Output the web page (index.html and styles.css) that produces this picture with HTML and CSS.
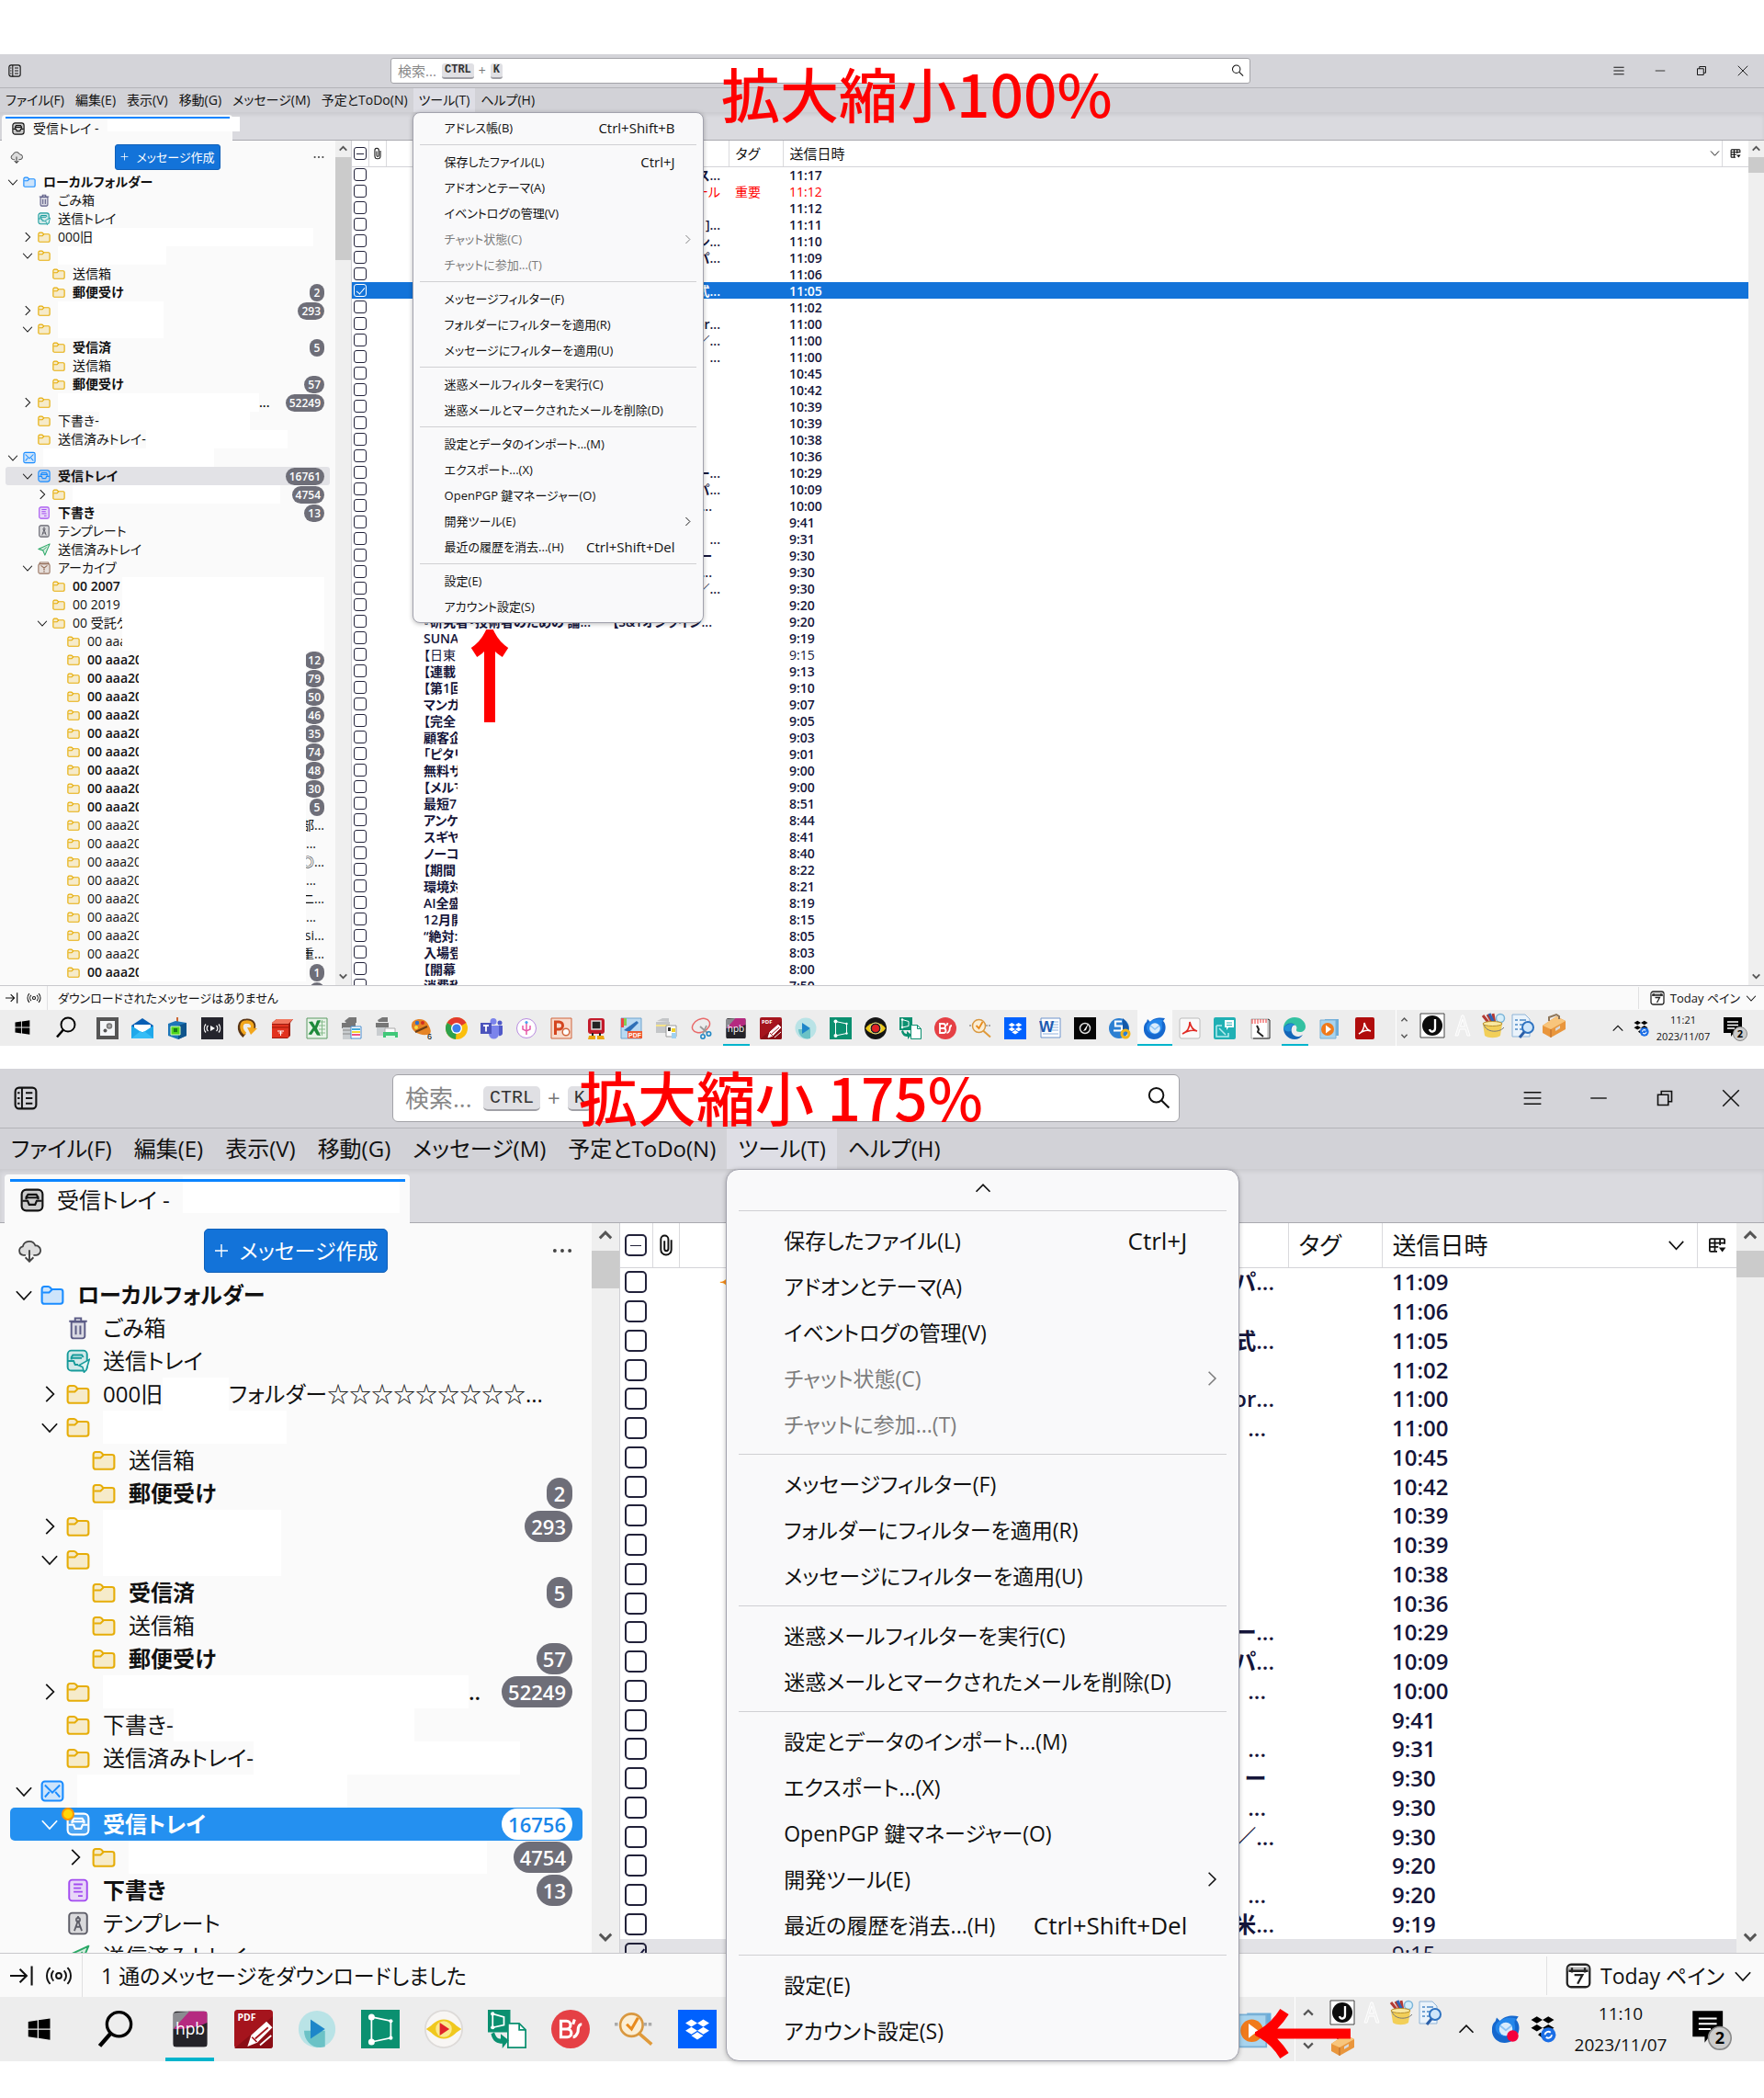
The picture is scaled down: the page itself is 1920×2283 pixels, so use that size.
FILE: index.html
```html
<!DOCTYPE html>
<html lang="ja">
<head>
<meta charset="utf-8">
<title>拡大縮小 100% / 175%</title>
<link rel="stylesheet" href="styles.css">
</head>
<body>
<svg class="defs" aria-hidden="true">
<symbol id="folder" viewBox="0 0 16 16"><path d="M1 4.2C1 3 1.6 2.5 2.6 2.5h2.6c.7 0 1 .2 1.4.7l.9 1.1h5.9c1 0 1.600.5 1.600 1.500v6.700c0 1-.6 1.500-1.600 1.500H2.600c-1 0-1.600-.5-1.600-1.500z" fill="currentColor" fill-opacity=".2" stroke="currentColor" stroke-width="1.300"/><path d="M1.500 6.500h4.300l2-2" fill="none" stroke="currentColor" stroke-width="1.200"/></symbol>
<symbol id="trash" viewBox="0 0 16 16"><path d="M3.500 4v9.500a1.500 1.500 0 0 0 1.500 1.500h6a1.500 1.500 0 0 0 1.500-1.500V4z" fill="currentColor" fill-opacity=".2" stroke="currentColor" stroke-width="1.200"/><path d="M2 3.500h12M6 3V1.500h4V3M6.500 6.500v6M9.500 6.500v6" fill="none" stroke="currentColor" stroke-width="1.200"/></symbol>
<symbol id="outbox" viewBox="0 0 16 16"><rect x="1" y="1" width="13" height="13.500" rx="2.500" fill="currentColor" fill-opacity=".18" stroke="currentColor" stroke-width="1.200"/><path d="M3.500 7V5.500l1-1.500h6l1 1.500M3.500 6h7M1 8h4l1 2.500h2" fill="none" stroke="currentColor" stroke-width="1.200"/><path d="M15.500 7l-7 4 2.500 1 1 3.500 1.500-1.500z" fill="#e3f5f5" stroke="currentColor"/></symbol>
<symbol id="inbox" viewBox="0 0 16 16"><rect x="1" y="1" width="14" height="14" rx="3" fill="currentColor" fill-opacity=".2" stroke="currentColor" stroke-width="1.300"/><path d="M4 7.500V6l1.200-1.800h5.600L12 6v1.500M4 6.300h8M1.500 8.500H5l1 2.500h4l1-2.500h3.500" fill="none" stroke="currentColor" stroke-width="1.300"/></symbol>
<symbol id="mail" viewBox="0 0 16 16"><rect x="1" y="1.500" width="14" height="13" rx="2" fill="currentColor" fill-opacity=".2" stroke="currentColor" stroke-width="1.300"/><path d="M3 4l5 5 5-5M3 12l3-3.500M13 12l-3-3.500" fill="none" stroke="currentColor" stroke-width="1.200"/></symbol>
<symbol id="draft" viewBox="0 0 16 16"><rect x="2" y="1" width="12" height="14" rx="2" fill="currentColor" fill-opacity=".2" stroke="currentColor" stroke-width="1.200"/><path d="M5 4h6M5 6.500h5M5 9h6M8 11.800h3" stroke="currentColor" stroke-width="1.100"/></symbol>
<symbol id="template" viewBox="0 0 16 16"><rect x="2" y="1" width="12" height="14" rx="2" fill="currentColor" fill-opacity=".2" stroke="currentColor" stroke-width="1.200"/><path d="M8 3v2M8 6L5.500 13M8 6l2.500 7M6.200 10.300h3.600" fill="none" stroke="currentColor" stroke-width="1.100"/><circle cx="8" cy="5.500" r="1.300" fill="none" stroke="currentColor"/></symbol>
<symbol id="sent" viewBox="0 0 16 16"><path d="M15 1L1 7.500 6.500 9l2.500 6z" fill="currentColor" fill-opacity=".18" stroke="currentColor" stroke-width="1.200" stroke-linejoin="round"/><path d="M6.500 9L11 5" stroke="currentColor"/></symbol>
<symbol id="archive" viewBox="0 0 16 16"><rect x="1" y="3" width="14" height="12" rx="2" fill="currentColor" fill-opacity=".2" stroke="currentColor" stroke-width="1.200"/><path d="M2 3l1-1.800h10L14 3M4 5l4 3 4-3M8 8v1.500M7 10h2M8 11.500v2" fill="none" stroke="currentColor" stroke-width="1.200"/></symbol>
<symbol id="down" viewBox="0 0 16 16"><path d="M1.500 5l6.500 7 6.500-7" fill="none" stroke="currentColor" stroke-width="1.400"/></symbol>
<symbol id="up" viewBox="0 0 16 16"><path d="M2 11l6-6 6 6" fill="none" stroke="currentColor" stroke-width="1.400"/></symbol>
<symbol id="right" viewBox="0 0 16 16"><path d="M5 1.500l6.500 6.500L5 14.500" fill="none" stroke="currentColor" stroke-width="1.400"/></symbol>
<symbol id="sup" viewBox="0 0 16 16"><path d="M2.500 11L8 5.500l5.500 5.500" fill="none" stroke="#555" stroke-width="2.600"/></symbol>
<symbol id="sdown" viewBox="0 0 16 16"><path d="M2.500 5L8 10.500 13.500 5" fill="none" stroke="#555" stroke-width="2.600"/></symbol>
<symbol id="spaces" viewBox="0 0 16 16"><rect x="1" y="1" width="14" height="14" rx="2.500" fill="none" stroke="currentColor" stroke-width="1.300"/><path d="M5.500 1v14M8 4.500h4.500M8 8h4.500M8 11.500h4.500M2.500 4.500h1.500M2.500 8h1.500M2.500 11.500h1.500" stroke="currentColor" stroke-width="1.200"/></symbol>
<symbol id="lens" viewBox="0 0 16 16"><circle cx="6.500" cy="6" r="4.800" fill="none" stroke="currentColor" stroke-width="1.200"/><path d="M10 9.500l5 5" stroke="currentColor" stroke-width="1.300"/></symbol>
<symbol id="cloud" viewBox="0 0 16 16"><path d="M5.500 11H4a3 3 0 0 1-.4-5.900A4.400 4.400 0 0 1 12 4.600 3.200 3.200 0 0 1 12.500 11h-1.800" fill="#ddd" stroke="currentColor" stroke-width="1.100"/><path d="M8 7.500V15M5.300 12.500L8 15.200l2.700-2.700" fill="none" stroke="currentColor" stroke-width="1.200"/></symbol>
<symbol id="dots" viewBox="0 0 16 16"><circle cx="3" cy="8" r="1.200" fill="currentColor"/><circle cx="8" cy="8" r="1.200" fill="currentColor"/><circle cx="13" cy="8" r="1.200" fill="currentColor"/></symbol>
<symbol id="plus" viewBox="0 0 16 16"><path d="M8 1v14M1 8h14" stroke="currentColor" stroke-width="1.400"/></symbol>
<symbol id="clip" viewBox="0 0 16 16"><path d="M11.500 4.500v6.500a3.500 3.500 0 0 1-7 0V4a2.500 2.500 0 0 1 5 0v6.500a1.300 1.300 0 0 1-2.600 0V5" fill="none" stroke="currentColor" stroke-width="1.200"/></symbol>
<symbol id="picker" viewBox="0 0 16 16"><path d="M14.500 7V3.500a1 1 0 0 0-1-1h-11a1 1 0 0 0-1 1v9a1 1 0 0 0 1 1H8M1.500 6h13M6 3v10M10.500 3v5M1.500 9.500H9" fill="none" stroke="currentColor" stroke-width="1.400"/><path d="M9.500 10h6l-3 4z" fill="currentColor"/></symbol>
<symbol id="menu3" viewBox="0 0 16 16"><path d="M.5 3h15M.5 8h15M.5 13h15" stroke="currentColor" stroke-width="1.300"/></symbol>
<symbol id="min" viewBox="0 0 16 16"><path d="M1 8h14" stroke="currentColor" stroke-width="1.100"/></symbol>
<symbol id="restore" viewBox="0 0 16 16"><path d="M2 5h9v9H2zM5 5V2h9v9h-3" fill="none" stroke="currentColor" stroke-width="1.300"/></symbol>
<symbol id="close" viewBox="0 0 16 16"><path d="M1 1l14 14M15 1L1 15" stroke="currentColor" stroke-width="1.200"/></symbol>
<symbol id="collapse" viewBox="0 0 16 16"><path d="M0 8h11M6.500 3.500L11 8l-4.500 4.500M14.500 1.500v13" fill="none" stroke="currentColor" stroke-width="1.300"/></symbol>
<symbol id="online" viewBox="0 0 16 16"><circle cx="8" cy="8" r="1.800" fill="none" stroke="currentColor" stroke-width="1.200"/><path d="M4.500 4.500a5 5 0 0 0 0 7M11.500 4.500a5 5 0 0 1 0 7M2.200 2.500a8 8 0 0 0 0 11M13.800 2.500a8 8 0 0 1 0 11" fill="none" stroke="currentColor" stroke-width="1.200"/></symbol>
<symbol id="cal" viewBox="0 0 16 16"><rect x="1" y="1" width="14" height="14" rx="2.500" fill="#fff" stroke="#222" stroke-width="1.300"/><path d="M1.500 2.500h13V5h-13z" fill="#bbb"/><path d="M2 5h12M5.500 7.500h5L7.500 13M4 3v3M12 3v3" fill="none" stroke="#222" stroke-width="1.300"/></symbol>

<symbol id="win" viewBox="0 0 24 24"><path d="M3 5.500l8-1.200v7.200H3zM12 4.200L22 2.700v8.800H12zM3 12.500h8v7.200l-8-1.200zM12 12.500h10v8.800l-10-1.500z" fill="#000"/></symbol>
<symbol id="find" viewBox="0 0 24 24"><circle cx="14" cy="9" r="7.500" fill="none" stroke="#000" stroke-width="1.900"/><path d="M9 14.500L2 22.500" stroke="#000" stroke-width="2.600"/></symbol>
<symbol id="a-photo" viewBox="0 0 24 24"><path d="M0 0h24v24H0z" fill="#555"/><path d="M4 4h16v16H4z" fill="#f4f6f8"/><circle cx="14" cy="9.500" r="2.500" fill="#aaa" stroke="#777" stroke-width="1.500"/><circle cx="9.500" cy="14.500" r="2" fill="#555"/></symbol>
<symbol id="a-mail" viewBox="0 0 24 24"><path d="M0 9l12-8 12 8v14H0z" fill="#0a5fb4"/><path d="M3 8h18v8H3z" fill="#fff"/><path d="M0 9l12 8 12-8v14H0z" fill="#1fa8ea"/><path d="M0 23l10-8 2 1.500L14 15l10 8z" fill="#36bdf6"/></symbol>
<symbol id="a-cube" viewBox="0 0 24 24"><path d="M12 0v5" stroke="#c63" stroke-width="2"/><path d="M2 7l8-3 12 2v14l-9 4L2 20z" fill="#1d76b8"/><path d="M13 9l9-3v14l-9 4z" fill="#0f548c"/><path d="M5 10h10v9H5z" fill="#4ed41a" stroke="#d8ffb0"/><path d="M8 12h4v4H8z" fill="#187c18"/></symbol>
<symbol id="a-cast" viewBox="0 0 24 24"><path d="M0 0h24v24H0z" fill="#25252d"/><path d="M10 9l5 3-5 3z" fill="#fff"/><path d="M7.500 9a4 4 0 0 0 0 6M5 7.500a7 7 0 0 0 0 9M16.500 9a4 4 0 0 1 0 6M19 7.500a7 7 0 0 1 0 9" fill="none" stroke="#fff" stroke-width="1.200"/></symbol>
<symbol id="a-swirl" viewBox="0 0 24 24"><path d="M9 20C2 14 3 4 11 4c7-.500 9 4 7 9" fill="none" stroke="#5a3514" stroke-width="5"/><path d="M10 18C4 13 5 5 11 5c6-.500 8 4 6 8" fill="none" stroke="#f3a71c" stroke-width="3.500"/><path d="M12 11l11 1-7 7z" fill="#f3a71c"/></symbol>
<symbol id="a-redbox" viewBox="0 0 24 24"><path d="M1 6l5-4h18l-3 4v14l-3 3H1z" fill="#9c1c10"/><path d="M1 8h18v14H1z" fill="#e2331f"/><path d="M1 6l5-4h18l-5 5H1z" fill="#f2775f"/><path d="M1 11h18" stroke="#b3200f" stroke-width="1.500"/><path d="M7 15h7M8.500 17h4M10.500 15v5" stroke="#fff"/></symbol>
<symbol id="a-excel" viewBox="0 0 24 24"><path d="M1 1h22v22H1z" fill="#e8f3e8" stroke="#5b9a63"/><path d="M14 5h7M14 9h7M14 13h7M14 17h7M17.500 3v17" stroke="#86bb8b"/><path d="M3 5l4-.500 3 5 2-6 4-.500-4 9 4 8-4-.500-3-5-3 4.500-3.500-.500 5-7z" fill="#1e8a3b"/></symbol>
<symbol id="a-printer" viewBox="0 0 24 24"><path d="M4 4l5-4h8v6H6zM1 6h15v6H1z" fill="#777"/><path d="M2 11h10v13H2z" fill="#c9cdd0"/><path d="M2 14h10M2 18h10" stroke="#888"/><path d="M11 10h11v13H11z" fill="#fff" stroke="#4a8ed0"/><path d="M12 15h9v2h-9z" fill="#f3d833"/><path d="M12 18h9v2h-9z" fill="#e58"/><path d="M12 12h9v2h-9z" fill="#4ad"/></symbol>
<symbol id="a-printer2" viewBox="0 0 24 24"><path d="M2 3l5-3h6v5H3zM0 6h14v5H0z" fill="#777"/><path d="M1 11h10v9H1z" fill="#c9cdd0"/><path d="M10 12h11v5H10z" fill="#fff" stroke="#aaa"/><path d="M8 16h16v6H8z" fill="#3fc878"/><path d="M11 20h10v4H11z" fill="#dff5e8"/></symbol>
<symbol id="a-palette" viewBox="0 0 24 24"><path d="M1 8C2 1 14 0 18 6c4 7 6 12 0 13C9 20 0 15 1 8z" fill="#e58324"/><circle cx="7" cy="6" r="2.200" fill="#3170c8"/><circle cx="13" cy="6" r="2" fill="#d02f24"/><circle cx="6" cy="11" r="2" fill="#f7dd42"/><path d="M5 16l13-6" stroke="#6b3d16" stroke-width="2"/><text x="18" y="24" font-size="9" font-family="Liberation Sans">6</text></symbol>
<symbol id="a-chrome" viewBox="0 0 24 24"><circle cx="12" cy="12" r="12" fill="#fbbf0d"/><path d="M12 12L1.600 6A12 12 0 0 1 22.400 6z" fill="#e23a2e"/><path d="M12 12l-1 12A12 12 0 0 1 1.600 6z" fill="#2da14c"/><circle cx="12" cy="12" r="6" fill="#fff"/><circle cx="12" cy="12" r="4.600" fill="#3c7fee"/></symbol>
<symbol id="a-teams" viewBox="0 0 24 24"><circle cx="14" cy="4.500" r="3.500" fill="#7b83eb"/><circle cx="21" cy="6" r="2.500" fill="#5059c9"/><path d="M9 9h11v9a5.500 5.500 0 0 1-11 0z" fill="#7b83eb"/><path d="M20 9h4v8a3 3 0 0 1-4 3z" fill="#5059c9"/><path d="M0 6h12v12H0z" fill="#4b53bc"/><path d="M3 9h6M6 9v6.500" stroke="#fff" stroke-width="1.800"/></symbol>
<symbol id="a-note" viewBox="0 0 24 24"><circle cx="12" cy="12" r="10.500" fill="#fff" stroke="#b98be0"/><path d="M12 5v14M8 9v4l4 2 4-2V9" fill="none" stroke="#e75aa8" stroke-width="1.500"/><circle cx="12" cy="5.500" r="1.600" fill="#4ba2ee"/></symbol>
<symbol id="a-ppt" viewBox="0 0 24 24"><path d="M1 1h22v22H1z" fill="#f7dccf" stroke="#d0653d"/><path d="M5.500 19V5h4a4 4 0 0 1 0 8H6" fill="none" stroke="#d4451f" stroke-width="3"/><circle cx="17" cy="16" r="3.800" fill="#fff" stroke="#d0653d" stroke-width="1.500"/></symbol>
<symbol id="a-robot" viewBox="0 0 24 24"><rect x="3" y="1" width="18" height="17" rx="3" fill="#c31b2b"/><path d="M7 4h10v9H7z" fill="#222" stroke="#ddd" stroke-width="1.500"/><path d="M8 17v4M16 17v4" stroke="#222" stroke-width="2"/><path d="M4 20h7v4H3zM13 20h7l1 4h-8z" fill="#eba712"/></symbol>
<symbol id="a-pdfx" viewBox="0 0 24 24"><path d="M1 1h22v22H1z" fill="#b9d9f2" stroke="#6fa4cf"/><path d="M1 1h3v10H1z" fill="#e44"/><path d="M4 1h3v8H4z" fill="#8c5"/><path d="M4 14L18 4l2 2-10 10z" fill="#2e6fb7"/><path d="M8 15h16v8H8z" fill="#ee5a32"/><text x="9" y="22" font-size="7" font-weight="700" fill="#fff" font-family="Liberation Sans">PDF</text></symbol>
<symbol id="a-scan" viewBox="0 0 24 24"><path d="M2 4l6-3h7v4zM1 5h15v12H1z" fill="#c4c6c8"/><path d="M1 8h15v2H1z" fill="#f6e48a"/><path d="M12 9h11v12H12z" fill="#fff" stroke="#999"/><path d="M14 11h3v4h-3z" fill="#333"/><path d="M18 12h4v4h-4z" fill="#f2d22a"/><path d="M18 17h5v6h-5z" fill="#9fd0f0"/></symbol>
<symbol id="a-snip" viewBox="0 0 24 24"><ellipse cx="12" cy="9" rx="10" ry="7" fill="none" stroke="#e86a6a" stroke-width="1.500" transform="rotate(-25 12 9)"/><path d="M11 10l8 7M18 9l-4 9" stroke="#999" stroke-width="1.800"/><circle cx="20.500" cy="18" r="2.200" fill="none" stroke="#2187c4" stroke-width="1.600"/><circle cx="14" cy="21" r="2.200" fill="none" stroke="#2187c4" stroke-width="1.600"/></symbol>
<symbol id="a-hpb" viewBox="0 0 24 24"><rect x="1.500" y="1" width="21" height="22" rx="2" fill="#2b2a2e"/><path d="M2 9l9-8h10.500a1 1 0 0 1 1 1v10H2z" fill="#b52a80"/><path d="M1.500 12V2l10-1z" fill="#8b8b90"/><path d="M1.500 12C9 12 17 11 22.500 8v14a1 1 0 0 1-1 1h-19a1 1 0 0 1-1-1z" fill="#242328"/><text x="12" y="15.500" text-anchor="middle" font-size="10" fill="#fff" font-family="Open Sans">hpb</text></symbol>
<symbol id="a-pdf" viewBox="0 0 24 24"><rect width="24" height="24" rx="2" fill="#a5141d"/><path d="M0 24L24 4v18a2 2 0 0 1-2 2z" fill="#8a0e16"/><text x="2" y="7" font-size="6" font-weight="700" fill="#fff" font-family="Open Sans">PDF</text><path d="M9 22l2-6 9-8 3 3-9 9zM16 22l7-6" fill="#fff" stroke="#fff"/><path d="M11 17l3 3M13 18l8-7" stroke="#a5141d"/></symbol>
<symbol id="a-play" viewBox="0 0 24 24"><circle cx="12" cy="12" r="11.500" fill="#b9e3e6"/><path d="M4 13h13v10c-7 2-13-3-13-10z" fill="#6bc2c6"/><path d="M8 6l9 6-9 6z" fill="#1e86c9"/></symbol>
<symbol id="a-frame" viewBox="0 0 24 24"><path d="M0 0h24v24H0z" fill="#0b9070"/><path d="M6.500 4.500v15.500l12-2.500V7z" fill="none" stroke="#fff"/><circle cx="6.500" cy="4.500" r="2" fill="#fff"/><circle cx="6.500" cy="20" r="2" fill="#fff"/><circle cx="18.500" cy="7" r="1.200" fill="#fff"/><circle cx="18.500" cy="17.500" r="1.200" fill="#fff"/></symbol>
<symbol id="a-eye" viewBox="0 0 24 24"><circle cx="12" cy="12" r="12" fill="#151515"/><path d="M1 12c5-8 17-8 22 0-5 8-17 8-22 0z" fill="#ecc818"/><circle cx="12" cy="12" r="6" fill="#222" stroke="#f8ec90"/><circle cx="12" cy="12" r="4" fill="#e02024"/></symbol>
<symbol id="a-eye2" viewBox="0 0 24 24"><circle cx="12" cy="12" r="11.500" fill="#f8f6f4" stroke="#dddad8"/><path d="M1 12c5-3 6-6 11-6s6 3 11 6c-5 3-6 6-11 6s-6-3-11-6z" fill="#f0c81e"/><circle cx="12" cy="12" r="5" fill="#fbe98c"/><path d="M9.500 8l6 4-6 4z" fill="#e0242a"/></symbol>
<symbol id="a-copy" viewBox="0 0 24 24"><path d="M0 0h14v14H0z" fill="#0b9070"/><path d="M3 2.500v8.500l7-1.500V4.500z" fill="none" stroke="#fff"/><circle cx="3" cy="2.500" r="1.200" fill="#fff"/><circle cx="3" cy="11" r="1.200" fill="#fff"/><path d="M12.500 8.500h7l4 4v11h-11z" fill="#fff" stroke="#0b9070"/><path d="M19.500 8.500v4h4" fill="none" stroke="#0b9070"/><path d="M2 15c1 5 4 6 7 6v3l4-5-5-4v3c-2 0-3-1-4-4z" fill="#0b9070"/></symbol>
<symbol id="a-bs" viewBox="0 0 24 24"><circle cx="12" cy="12" r="12" fill="#e54045"/><path d="M6 7v10h4a2.500 2.500 0 0 0 0-5H6h3.500a2.500 2.500 0 0 0 0-5zM14.500 6l-1 3M19 9c-3 0-2 4-2.500 5s-1 3-3 3" fill="none" stroke="#fff" stroke-width="1.800"/></symbol>
<symbol id="a-check" viewBox="0 0 24 24"><circle cx="10.500" cy="9.500" r="7" fill="#fbeed5" stroke="#d99840" stroke-width="1.500"/><path d="M7.500 9l3 3 4-7" fill="none" stroke="#e88a1c" stroke-width="1.800"/><path d="M15 14.500l8 7" stroke="#e09a3a" stroke-width="2"/><path d="M0 9h3M18 9h6" stroke="#aaa" stroke-width="2" stroke-dasharray="2 1"/></symbol>
<symbol id="a-box" viewBox="0 0 24 24"><path d="M0 0h24v24H0z" fill="#0061fe"/><path d="M8.300 6l3.700 2.300-3.700 2.300-3.700-2.300zM15.700 6l3.700 2.300-3.700 2.300L12 8.300zM8.300 10.700L12 13l-3.700 2.300L4.600 13zM15.700 10.700l3.700 2.300-3.700 2.300L12 13zM12 13.900l3.700 2.300-3.700 2.300-3.700-2.300z" fill="#fff"/></symbol>
<symbol id="a-word" viewBox="0 0 24 24"><path d="M2 1h21v21H2z" fill="#fff" stroke="#6f94cc"/><path d="M12 5h9M12 8h9M14 11h7M14 14h7M4 18h17" stroke="#8fb0dd"/><text x="0" y="16" font-size="17" font-weight="700" fill="#1e5bb0" font-family="Liberation Sans">W</text></symbol>
<symbol id="a-clock" viewBox="0 0 24 24"><path d="M0 0h24v24H0z" fill="#050505"/><circle cx="12" cy="12" r="5.500" fill="none" stroke="#ddd" stroke-width="1.500"/><path d="M10 15l6-9-3 8z" fill="#fff"/></symbol>
<symbol id="a-globe" viewBox="0 0 24 24"><circle cx="11" cy="12" r="11" fill="#2c7fd2"/><path d="M14 4.500H7v5h7v5H5" fill="none" stroke="#fff" stroke-width="2.200"/><path d="M15 1c6 5 7 10 6 16l-6-3z" fill="#1458a8"/><circle cx="18" cy="18" r="4" fill="none" stroke="#f1b51c" stroke-width="3"/></symbol>
<symbol id="a-bird" viewBox="0 0 24 24"><path d="M4 2l3 3c4-5 11-5 16-4l-2 3c3 3 3 8 2 11-2 6-7 9-12 9C4 24-1 18 0 11c.500-3 1-4 3-6z" fill="#1668ce"/><path d="M5 6c5-4 11-5 16-3-3 3 0 6-1 9s-5 8-11 6S1 10 5 6z" fill="#2486ea"/><circle cx="12" cy="12" r="5.800" fill="#d9ecfc"/><path d="M7 9l5 4 5-4" fill="none" stroke="#8dc4f5" stroke-width="1.500"/></symbol>
<symbol id="a-acro" viewBox="0 0 24 24"><rect x="1" y="1" width="22" height="22" rx="2" fill="#fafafa" stroke="#bbb"/><path d="M12 5c1 5 3 9 8 10-6-2-11 0-16 3 5-2 8-7 8-13z" fill="none" stroke="#e12a24" stroke-width="1.600"/></symbol>
<symbol id="a-teal" viewBox="0 0 24 24"><rect width="24" height="24" rx="2" fill="#20b0b4"/><path d="M12 3h10v8h-6l-2 3v-3h-2z" fill="#fff"/><path d="M14 6h6M14 8.500h6" stroke="#20b0b4"/><path d="M3 9h6M3 9v12h13v-4M6 12l7 7" fill="none" stroke="#b5ecee" stroke-width="1.500"/></symbol>
<symbol id="a-pad" viewBox="0 0 24 24"><path d="M3 2h18v21H3z" fill="#fff" stroke="#aaa"/><path d="M21 2l2 1v20H5" fill="none" stroke="#222"/><path d="M4 2v5M7 2v5M10 2v5M13 2v4M16 2v4M19 2v4" stroke="#e33"/><path d="M9 9l2 4-1 3 6 5" fill="none" stroke="#222" stroke-width="2"/></symbol>
<symbol id="a-edge" viewBox="0 0 24 24"><path d="M0 12C0 5 5 0 12 0c7 0 12 5 12 10 0 4-3 6-6 6-3 0-4-1-4-2 0-2 1-2 0-4-1-3-9-4-14 2z" fill="#33c1a1"/><path d="M0 12c2-5 8-7 12-4-4 1-5 9 0 12 3 2 6 1 9-1-2 3-5 5-9 5C5 24 0 18 0 12z" fill="#1466b8"/><path d="M0 12c4-6 11-6 13-3-3-1-6 1-5 6-3 1-7 0-8-3z" fill="#2490d8"/></symbol>
<symbol id="a-media" viewBox="0 0 24 24"><path d="M7 2h15v18H7z" fill="#6caedb"/><path d="M2 3h17v20H2z" fill="#a8d4ee" stroke="#7ab0d5"/><circle cx="10" cy="13" r="7" fill="#f07a1b"/><path d="M8 8.500l6 4.500-6 4.500z" fill="#fff"/></symbol>
<symbol id="a-acro2" viewBox="0 0 24 24"><rect x="2" width="21" height="24" rx="2" fill="#b00d0d"/><path d="M12 6c1 4 3 8 7 9-5-2-9 0-13 3 4-2 6-7 6-12z" fill="none" stroke="#fff" stroke-width="1.500"/></symbol>
<symbol id="t-j" viewBox="0 0 28 28"><path d="M1 1h26v26H1z" fill="#fff" stroke="#444"/><circle cx="14" cy="14" r="11" fill="#0c0c0c"/><path d="M17 7v10c0 4-5 5-6 1" fill="none" stroke="#fff" stroke-width="2.300"/></symbol>
<symbol id="t-a" viewBox="0 0 28 28"><path d="M6 25l7-22h2l7 22h-3l-2-7h-6l-2 7zM11.500 15h5L14 7z" fill="#f2f2f2" stroke="#fff"/></symbol>
<symbol id="t-bucket" viewBox="0 0 28 28"><path d="M3 3l8 10M8 2l6 10M14 1l2 11" stroke="#b33a34" stroke-width="3"/><path d="M10 1l5 10" stroke="#2d62b5" stroke-width="3"/><circle cx="22" cy="6" r="4.500" fill="#d5eefa" stroke="#7ab4d8" stroke-width="1.500"/><path d="M3 12h21l-2 13c-4 3-13 3-17 0z" fill="#f2cf58"/><ellipse cx="13.500" cy="12" rx="10.500" ry="2.500" fill="#fae9a0" stroke="#b8902c"/><path d="M4 13c3 9 17 9 22 3" fill="none" stroke="#777"/></symbol>
<symbol id="t-doc" viewBox="0 0 28 28"><path d="M2 2h14l5 5v19H2z" fill="#eaf3fb" stroke="#8fb4d8"/><path d="M5 8h3M5 13h3M5 18h3M10 8h7M10 13h5M10 18h5" stroke="#4c89c6" stroke-width="1.500"/><circle cx="19" cy="16" r="6" fill="#cfe6fa" stroke="#2e72c0" stroke-width="2"/><path d="M15 21l-5 6" stroke="#2b5fa8" stroke-width="3"/></symbol>
<symbol id="t-tool" viewBox="0 0 28 28"><path d="M2 14L17 4l10 5v9L11 27 2 22z" fill="#e9963c"/><path d="M2 14L17 4l10 5-16 9z" fill="#f8c57c"/><path d="M11 18v9" stroke="#b8682a"/><path d="M9 9V5l8-3 3 2v3" fill="none" stroke="#8e7558" stroke-width="2"/><path d="M16 17l5-3v3l-5 3z" fill="#d8d8d8"/></symbol>
<symbol id="t-sync" viewBox="0 0 24 24"><path d="M7 1l5 3-5 3-5-3zM17 1l5 3-5 3-5-3zM7 8l5 3-5 3-5-3zM17 8l5 3-5 3-5-3zM10 15l3 2-2 2-3-2z" fill="#000"/><circle cx="17" cy="17" r="6.500" fill="#1b6ee6"/><path d="M14 17a3 3 0 0 1 5-2M20 17a3 3 0 0 1-5 2" fill="none" stroke="#fff" stroke-width="1.500"/></symbol>
<symbol id="t-note" viewBox="0 0 28 28"><path d="M2 2h20v17h-9l-3 4v-4H2z" fill="#000"/><path d="M6 7h12M6 10.500h12M6 14h8" stroke="#fff" stroke-width="1.300"/><circle cx="20" cy="20" r="7.500" fill="#ccc" stroke="#888"/><text x="20" y="24" text-anchor="middle" font-size="11" font-weight="700" font-family="Open Sans">2</text></symbol>
</svg>

<section class="window">
  <header class="titlebar">
    <div class="lead"><svg class="ico"><use href="#spaces"/></svg></div>
    <div class="search"><input type="text" placeholder="検索..." aria-label="検索"><kbd>CTRL</kbd><span>+</span><kbd>K</kbd><button class="go" aria-label="検索を実行"><svg class="ico"><use href="#lens"/></svg></button></div>
    <div class="winbtns"><button aria-label="メニュー"><svg><use href="#menu3"/></svg></button><button aria-label="最小化"><svg><use href="#min"/></svg></button><button aria-label="元に戻す"><svg><use href="#restore"/></svg></button><button aria-label="閉じる"><svg><use href="#close"/></svg></button></div>
  </header>
  <nav class="menubar">
    <button>ファイル(F)</button><button>編集(E)</button><button>表示(V)</button><button>移動(G)</button><button>メッセージ(M)</button><button>予定とToDo(N)</button>
    <div class="anchor"><button class="open">ツール(T)</button>
      <div class="menu">
        <button>アドレス帳(B)<span>Ctrl+Shift+B</span></button>
        <hr>
        <button>保存したファイル(L)<span>Ctrl+J</span></button>
        <button>アドオンとテーマ(A)</button>
        <button>イベントログの管理(V)</button>
        <button disabled>チャット状態(C)<svg class="sub"><use href="#right"/></svg></button>
        <button disabled>チャットに参加...(T)</button>
        <hr>
        <button>メッセージフィルター(F)</button>
        <button>フォルダーにフィルターを適用(R)</button>
        <button>メッセージにフィルターを適用(U)</button>
        <hr>
        <button>迷惑メールフィルターを実行(C)</button>
        <button>迷惑メールとマークされたメールを削除(D)</button>
        <hr>
        <button>設定とデータのインポート...(M)</button>
        <button>エクスポート...(X)</button>
        <button>OpenPGP 鍵マネージャー(O)</button>
        <button>開発ツール(E)<svg class="sub"><use href="#right"/></svg></button>
        <button>最近の履歴を消去...(H)<span>Ctrl+Shift+Del</span></button>
        <hr>
        <button>設定(E)</button>
        <button>アカウント設定(S)</button>
      </div>
    </div>
    <button>ヘルプ(H)</button>
  </nav>
  <div class="tabs"><div class="tab"><svg class="ico"><use href="#inbox"/></svg><span>受信トレイ -</span><i class="mask"></i></div></div>
  <div class="panes">
    <aside class="folders">
      <div class="side">
        <div class="tools"><button class="plain" aria-label="受信"><svg class="ico"><use href="#cloud"/></svg></button><button class="compose"><svg><use href="#plus"/></svg>メッセージ作成</button><button class="plain" aria-label="その他"><svg class="ico"><use href="#dots"/></svg></button></div>
        <ul class="tree">
          <li class="l0 b"><svg class="tw"><use href="#down"/></svg><svg class="ico blue"><use href="#folder"/></svg><span>ローカルフォルダー</span></li>
          <li class="l1"><i class="tw"></i><svg class="ico slate"><use href="#trash"/></svg><span>ごみ箱</span></li>
          <li class="l1"><i class="tw"></i><svg class="ico teal"><use href="#outbox"/></svg><span>送信トレイ</span></li>
          <li class="l1"><svg class="tw"><use href="#right"/></svg><svg class="ico"><use href="#folder"/></svg><span>000旧</span><i class="mask" style="width:240px"></i></li>
          <li class="l1"><svg class="tw"><use href="#down"/></svg><svg class="ico"><use href="#folder"/></svg><i class="mask" style="width:118px"></i></li>
          <li class="l2"><i class="tw"></i><svg class="ico"><use href="#folder"/></svg><span>送信箱</span></li>
          <li class="l2 b"><i class="tw"></i><svg class="ico"><use href="#folder"/></svg><span>郵便受け</span><em>2</em></li>
          <li class="l1"><svg class="tw"><use href="#right"/></svg><svg class="ico"><use href="#folder"/></svg><i class="mask" style="width:115px"></i><em>293</em></li>
          <li class="l1"><svg class="tw"><use href="#down"/></svg><svg class="ico"><use href="#folder"/></svg><i class="mask" style="width:115px"></i></li>
          <li class="l2 b"><i class="tw"></i><svg class="ico"><use href="#folder"/></svg><span>受信済</span><em>5</em></li>
          <li class="l2"><i class="tw"></i><svg class="ico"><use href="#folder"/></svg><span>送信箱</span></li>
          <li class="l2 b"><i class="tw"></i><svg class="ico"><use href="#folder"/></svg><span>郵便受け</span><em>57</em></li>
          <li class="l1 b"><svg class="tw"><use href="#right"/></svg><svg class="ico"><use href="#folder"/></svg><i class="mask" style="width:219px"></i><span>...</span><em>52249</em></li>
          <li class="l1"><i class="tw"></i><svg class="ico"><use href="#folder"/></svg><span>下書き-</span><i class="mask" style="width:164px"></i></li>
          <li class="l1"><i class="tw"></i><svg class="ico"><use href="#folder"/></svg><span>送信済みトレイ-</span><i class="mask" style="width:154px"></i></li>
          <li class="l0"><svg class="tw"><use href="#down"/></svg><svg class="ico blue"><use href="#mail"/></svg><i class="mask" style="width:186px"></i></li>
          <li class="l1 b sel"><svg class="tw"><use href="#down"/></svg><svg class="ico blue"><use href="#inbox"/></svg><span>受信トレイ</span><em>16761</em></li>
          <li class="l2 b"><svg class="tw"><use href="#right"/></svg><svg class="ico"><use href="#folder"/></svg><i class="mask" style="width:226px"></i><em>4754</em></li>
          <li class="l1 b"><i class="tw"></i><svg class="ico violet"><use href="#draft"/></svg><span>下書き</span><em>13</em></li>
          <li class="l1"><i class="tw"></i><svg class="ico gray"><use href="#template"/></svg><span>テンプレート</span></li>
          <li class="l1"><i class="tw"></i><svg class="ico green"><use href="#sent"/></svg><span>送信済みトレイ</span></li>
          <li class="l1"><svg class="tw"><use href="#down"/></svg><svg class="ico brown"><use href="#archive"/></svg><span>アーカイブ</span></li>
          <li class="l2 b"><i class="tw"></i><svg class="ico"><use href="#folder"/></svg><span class="cut54">00 2007</span><i class="mask grow"></i></li>
          <li class="l2"><i class="tw"></i><svg class="ico"><use href="#folder"/></svg><span class="cut54">00 2019</span><i class="mask grow"></i></li>
          <li class="l2"><svg class="tw"><use href="#down"/></svg><svg class="ico"><use href="#folder"/></svg><span class="cut54">00 受託ケ</span><i class="mask grow"></i></li>
          <li class="l3"><i class="tw"></i><svg class="ico"><use href="#folder"/></svg><span class="cut38">00 aaa</span><i class="mask grow"></i></li>
          <li class="l3 b"><i class="tw"></i><svg class="ico"><use href="#folder"/></svg><span class="cut56">00 aaa20</span><i class="mask grow"></i><b class="tail"><em>12</em></b></li>
          <li class="l3 b"><i class="tw"></i><svg class="ico"><use href="#folder"/></svg><span class="cut56">00 aaa20</span><i class="mask grow"></i><b class="tail"><em>79</em></b></li>
          <li class="l3 b"><i class="tw"></i><svg class="ico"><use href="#folder"/></svg><span class="cut56">00 aaa20</span><i class="mask grow"></i><b class="tail"><em>50</em></b></li>
          <li class="l3 b"><i class="tw"></i><svg class="ico"><use href="#folder"/></svg><span class="cut56">00 aaa20</span><i class="mask grow"></i><b class="tail"><em>46</em></b></li>
          <li class="l3 b"><i class="tw"></i><svg class="ico"><use href="#folder"/></svg><span class="cut56">00 aaa20</span><i class="mask grow"></i><b class="tail"><em>35</em></b></li>
          <li class="l3 b"><i class="tw"></i><svg class="ico"><use href="#folder"/></svg><span class="cut56">00 aaa20</span><i class="mask grow"></i><b class="tail"><em>74</em></b></li>
          <li class="l3 b"><i class="tw"></i><svg class="ico"><use href="#folder"/></svg><span class="cut56">00 aaa20</span><i class="mask grow"></i><b class="tail"><em>48</em></b></li>
          <li class="l3 b"><i class="tw"></i><svg class="ico"><use href="#folder"/></svg><span class="cut56">00 aaa20</span><i class="mask grow"></i><b class="tail"><em>30</em></b></li>
          <li class="l3 b"><i class="tw"></i><svg class="ico"><use href="#folder"/></svg><span class="cut56">00 aaa20</span><i class="mask grow"></i><b class="tail"><em>5</em></b></li>
          <li class="l3"><i class="tw"></i><svg class="ico"><use href="#folder"/></svg><span class="cut56">00 aaa20</span><i class="mask grow"></i><b class="tail">部...</b></li>
          <li class="l3"><i class="tw"></i><svg class="ico"><use href="#folder"/></svg><span class="cut56">00 aaa20</span><i class="mask grow"></i><b class="tail s">...</b></li>
          <li class="l3"><i class="tw"></i><svg class="ico"><use href="#folder"/></svg><span class="cut56">00 aaa20</span><i class="mask grow"></i><b class="tail">◎...</b></li>
          <li class="l3"><i class="tw"></i><svg class="ico"><use href="#folder"/></svg><span class="cut56">00 aaa20</span><i class="mask grow"></i><b class="tail s">...</b></li>
          <li class="l3"><i class="tw"></i><svg class="ico"><use href="#folder"/></svg><span class="cut56">00 aaa20</span><i class="mask grow"></i><b class="tail">ニ...</b></li>
          <li class="l3"><i class="tw"></i><svg class="ico"><use href="#folder"/></svg><span class="cut56">00 aaa20</span><i class="mask grow"></i><b class="tail s">...</b></li>
          <li class="l3"><i class="tw"></i><svg class="ico"><use href="#folder"/></svg><span class="cut56">00 aaa20</span><i class="mask grow"></i><b class="tail">si...</b></li>
          <li class="l3"><i class="tw"></i><svg class="ico"><use href="#folder"/></svg><span class="cut56">00 aaa20</span><i class="mask grow"></i><b class="tail">重...</b></li>
          <li class="l3 b"><i class="tw"></i><svg class="ico"><use href="#folder"/></svg><span class="cut56">00 aaa20</span><i class="mask grow"></i><b class="tail"><em>1</em></b></li>
          <li class="l3 b"><i class="tw"></i><em>2</em></li>
        </ul>
      </div>
      <div class="bar"><svg><use href="#sup"/></svg><i></i><svg><use href="#sdown"/></svg></div>
    </aside>
    <div class="threads">
      <div class="list">
      <table>
        <colgroup><col class="c1"><col class="c2"><col class="c3"><col class="c4"><col class="c5"><col><col class="c7"></colgroup>
        <thead><tr><th><input type="checkbox" class="minus" aria-label="すべて選択"></th><th><svg class="ico"><use href="#clip"/></svg></th><th></th><th></th><th>タグ</th><th><div>送信日時<svg class="ico"><use href="#down"/></svg></div></th><th><svg class="ico"><use href="#picker"/></svg></th></tr></thead>
        <tbody>
        <tr><td><input type="checkbox" aria-label="選択"></td><td></td><td></td><td>ス...</td><td></td><td colspan="2">11:17</td></tr>
        <tr class="red"><td><input type="checkbox" aria-label="選択"></td><td></td><td></td><td>ール</td><td>重要</td><td colspan="2">11:12</td></tr>
        <tr><td><input type="checkbox" aria-label="選択"></td><td></td><td></td><td></td><td></td><td colspan="2">11:12</td></tr>
        <tr><td><input type="checkbox" aria-label="選択"></td><td></td><td></td><td>]...</td><td></td><td colspan="2">11:11</td></tr>
        <tr><td><input type="checkbox" aria-label="選択"></td><td></td><td></td><td>ン...</td><td></td><td colspan="2">11:10</td></tr>
        <tr><td><input type="checkbox" aria-label="選択"></td><td></td><td></td><td>パ...</td><td></td><td colspan="2">11:09</td></tr>
        <tr><td><input type="checkbox" aria-label="選択"></td><td></td><td></td><td></td><td></td><td colspan="2">11:06</td></tr>
        <tr class="on"><td><input type="checkbox" aria-label="選択" checked></td><td></td><td></td><td>式...</td><td></td><td colspan="2">11:05</td></tr>
        <tr><td><input type="checkbox" aria-label="選択"></td><td></td><td></td><td></td><td></td><td colspan="2">11:02</td></tr>
        <tr><td><input type="checkbox" aria-label="選択"></td><td></td><td></td><td>or...</td><td></td><td colspan="2">11:00</td></tr>
        <tr><td><input type="checkbox" aria-label="選択"></td><td></td><td></td><td>／...</td><td></td><td colspan="2">11:00</td></tr>
        <tr><td><input type="checkbox" aria-label="選択"></td><td></td><td></td><td>...</td><td></td><td colspan="2">11:00</td></tr>
        <tr><td><input type="checkbox" aria-label="選択"></td><td></td><td></td><td></td><td></td><td colspan="2">10:45</td></tr>
        <tr><td><input type="checkbox" aria-label="選択"></td><td></td><td></td><td></td><td></td><td colspan="2">10:42</td></tr>
        <tr><td><input type="checkbox" aria-label="選択"></td><td></td><td></td><td></td><td></td><td colspan="2">10:39</td></tr>
        <tr><td><input type="checkbox" aria-label="選択"></td><td></td><td></td><td></td><td></td><td colspan="2">10:39</td></tr>
        <tr><td><input type="checkbox" aria-label="選択"></td><td></td><td></td><td></td><td></td><td colspan="2">10:38</td></tr>
        <tr><td><input type="checkbox" aria-label="選択"></td><td></td><td></td><td></td><td></td><td colspan="2">10:36</td></tr>
        <tr><td><input type="checkbox" aria-label="選択"></td><td></td><td></td><td>ー...</td><td></td><td colspan="2">10:29</td></tr>
        <tr><td><input type="checkbox" aria-label="選択"></td><td></td><td></td><td>パ...</td><td></td><td colspan="2">10:09</td></tr>
        <tr><td><input type="checkbox" aria-label="選択"></td><td></td><td></td><td class="far">...</td><td></td><td colspan="2">10:00</td></tr>
        <tr><td><input type="checkbox" aria-label="選択"></td><td></td><td></td><td></td><td></td><td colspan="2">9:41</td></tr>
        <tr><td><input type="checkbox" aria-label="選択"></td><td></td><td></td><td>...</td><td></td><td colspan="2">9:31</td></tr>
        <tr><td><input type="checkbox" aria-label="選択"></td><td></td><td></td><td class="far">ー</td><td></td><td colspan="2">9:30</td></tr>
        <tr><td><input type="checkbox" aria-label="選択"></td><td></td><td></td><td class="far">...</td><td></td><td colspan="2">9:30</td></tr>
        <tr><td><input type="checkbox" aria-label="選択"></td><td></td><td></td><td>／...</td><td></td><td colspan="2">9:30</td></tr>
        <tr><td><input type="checkbox" aria-label="選択"></td><td></td><td></td><td></td><td></td><td colspan="2">9:20</td></tr>
        <tr><td><input type="checkbox" aria-label="選択"></td><td></td><td>『研究者・技術者のための 論...</td><td class="far">【S&amp;Tオンライン...</td><td></td><td colspan="2">9:20</td></tr>
        <tr><td><input type="checkbox" aria-label="選択"></td><td></td><td><span>SUNAR</span></td><td></td><td></td><td colspan="2">9:19</td></tr>
        <tr class="read"><td><input type="checkbox" aria-label="選択"></td><td></td><td><span>【日東</span></td><td></td><td></td><td colspan="2">9:15</td></tr>
        <tr><td><input type="checkbox" aria-label="選択"></td><td></td><td><span>【連載</span></td><td></td><td></td><td colspan="2">9:13</td></tr>
        <tr><td><input type="checkbox" aria-label="選択"></td><td></td><td><span>【第1回</span></td><td></td><td></td><td colspan="2">9:10</td></tr>
        <tr><td><input type="checkbox" aria-label="選択"></td><td></td><td><span>マンガで</span></td><td></td><td></td><td colspan="2">9:07</td></tr>
        <tr><td><input type="checkbox" aria-label="選択"></td><td></td><td><span>【完全</span></td><td></td><td></td><td colspan="2">9:05</td></tr>
        <tr><td><input type="checkbox" aria-label="選択"></td><td></td><td><span>顧客企</span></td><td></td><td></td><td colspan="2">9:03</td></tr>
        <tr><td><input type="checkbox" aria-label="選択"></td><td></td><td><span>「ピタリ</span></td><td></td><td></td><td colspan="2">9:01</td></tr>
        <tr><td><input type="checkbox" aria-label="選択"></td><td></td><td><span>無料サ</span></td><td></td><td></td><td colspan="2">9:00</td></tr>
        <tr><td><input type="checkbox" aria-label="選択"></td><td></td><td><span>【メルマ</span></td><td></td><td></td><td colspan="2">9:00</td></tr>
        <tr><td><input type="checkbox" aria-label="選択"></td><td></td><td><span>最短7</span></td><td></td><td></td><td colspan="2">8:51</td></tr>
        <tr><td><input type="checkbox" aria-label="選択"></td><td></td><td><span>アンケー</span></td><td></td><td></td><td colspan="2">8:44</td></tr>
        <tr><td><input type="checkbox" aria-label="選択"></td><td></td><td><span>スギヤマ</span></td><td></td><td></td><td colspan="2">8:41</td></tr>
        <tr><td><input type="checkbox" aria-label="選択"></td><td></td><td><span>ノーコー</span></td><td></td><td></td><td colspan="2">8:40</td></tr>
        <tr><td><input type="checkbox" aria-label="選択"></td><td></td><td><span>【期間</span></td><td></td><td></td><td colspan="2">8:22</td></tr>
        <tr><td><input type="checkbox" aria-label="選択"></td><td></td><td><span>環境対</span></td><td></td><td></td><td colspan="2">8:21</td></tr>
        <tr><td><input type="checkbox" aria-label="選択"></td><td></td><td><span>AI全盛</span></td><td></td><td></td><td colspan="2">8:19</td></tr>
        <tr><td><input type="checkbox" aria-label="選択"></td><td></td><td><span>12月開</span></td><td></td><td></td><td colspan="2">8:15</td></tr>
        <tr><td><input type="checkbox" aria-label="選択"></td><td></td><td><span>“絶対:</span></td><td></td><td></td><td colspan="2">8:05</td></tr>
        <tr><td><input type="checkbox" aria-label="選択"></td><td></td><td><span>入場登</span></td><td></td><td></td><td colspan="2">8:03</td></tr>
        <tr><td><input type="checkbox" aria-label="選択"></td><td></td><td><span>【開幕</span></td><td></td><td></td><td colspan="2">8:00</td></tr>
        <tr><td><input type="checkbox" aria-label="選択"></td><td></td><td><span>消費税</span></td><td></td><td></td><td colspan="2">7:50</td></tr>
        </tbody>
      </table>
      </div>
      <div class="bar short"><svg><use href="#sup"/></svg><i></i><svg><use href="#sdown"/></svg></div>
    </div>
  </div>
  <footer class="status"><svg class="ico"><use href="#collapse"/></svg><svg class="ico"><use href="#online"/></svg><p>ダウンロードされたメッセージはありません</p><button><svg class="ico"><use href="#cal"/></svg>Today ペイン<svg class="ico"><use href="#down"/></svg></button></footer>
  <div class="taskbar">
    <div class="start"><svg><use href="#win"/></svg><svg><use href="#find"/></svg></div>
    <div class="apps">
      <a href="#"><svg><use href="#a-photo"/></svg></a><a href="#"><svg><use href="#a-mail"/></svg></a><a href="#"><svg><use href="#a-cube"/></svg></a><a href="#"><svg><use href="#a-cast"/></svg></a><a href="#"><svg><use href="#a-swirl"/></svg></a><a href="#"><svg><use href="#a-redbox"/></svg></a><a href="#"><svg><use href="#a-excel"/></svg></a><a href="#"><svg><use href="#a-printer"/></svg></a><a href="#"><svg><use href="#a-printer2"/></svg></a><a href="#"><svg><use href="#a-palette"/></svg></a><a href="#"><svg><use href="#a-chrome"/></svg></a><a href="#"><svg><use href="#a-teams"/></svg></a><a href="#"><svg><use href="#a-note"/></svg></a><a href="#"><svg><use href="#a-ppt"/></svg></a><a href="#"><svg><use href="#a-robot"/></svg></a><a href="#"><svg><use href="#a-pdfx"/></svg></a><a href="#"><svg><use href="#a-scan"/></svg></a><a href="#"><svg><use href="#a-snip"/></svg></a><a href="#" class="run"><svg><use href="#a-hpb"/></svg></a><a href="#"><svg><use href="#a-pdf"/></svg></a><a href="#"><svg><use href="#a-play"/></svg></a><a href="#"><svg><use href="#a-frame"/></svg></a><a href="#"><svg><use href="#a-eye"/></svg></a><a href="#"><svg><use href="#a-copy"/></svg></a><a href="#"><svg><use href="#a-bs"/></svg></a><a href="#"><svg><use href="#a-check"/></svg></a><a href="#"><svg><use href="#a-box"/></svg></a><a href="#"><svg><use href="#a-word"/></svg></a><a href="#"><svg><use href="#a-clock"/></svg></a><a href="#"><svg><use href="#a-globe"/></svg></a><a href="#" class="run front"><svg><use href="#a-bird"/></svg></a><a href="#"><svg><use href="#a-acro"/></svg></a><a href="#"><svg><use href="#a-teal"/></svg></a><a href="#"><svg><use href="#a-pad"/></svg></a><a href="#" class="run"><svg><use href="#a-edge"/></svg></a><a href="#"><svg><use href="#a-media"/></svg></a><a href="#"><svg><use href="#a-acro2"/></svg></a>
    </div>
    <div class="spin"><svg><use href="#sup"/></svg><svg><use href="#sdown"/></svg></div>
    <div class="band"><svg><use href="#t-j"/></svg><svg><use href="#t-a"/></svg><svg><use href="#t-bucket"/></svg><svg><use href="#t-doc"/></svg><svg><use href="#t-tool"/></svg></div>
    <div class="tray"><svg class="more"><use href="#up"/></svg><svg><use href="#t-sync"/></svg><time>11:21<br>2023/11/07</time><svg class="note"><use href="#t-note"/></svg></div>
  </div>
  <p class="caption">拡大縮小100%</p>
  <svg class="arrow" viewBox="0 0 44 102"><path d="M22 97V6M5 25Q16 18 22 6 28 18 39 25" fill="none" stroke="#f00" stroke-width="12"/><path d="M16 92h12v9H16z" fill="#f00"/></svg>
</section>

<section class="window large">
  <header class="titlebar">
    <div class="lead"><svg class="ico"><use href="#spaces"/></svg></div>
    <div class="search"><input type="text" placeholder="検索..." aria-label="検索"><kbd>CTRL</kbd><span>+</span><kbd>K</kbd><button class="go" aria-label="検索を実行"><svg class="ico"><use href="#lens"/></svg></button></div>
    <div class="winbtns"><button aria-label="メニュー"><svg><use href="#menu3"/></svg></button><button aria-label="最小化"><svg><use href="#min"/></svg></button><button aria-label="元に戻す"><svg><use href="#restore"/></svg></button><button aria-label="閉じる"><svg><use href="#close"/></svg></button></div>
  </header>
  <nav class="menubar">
    <button>ファイル(F)</button><button>編集(E)</button><button>表示(V)</button><button>移動(G)</button><button>メッセージ(M)</button><button>予定とToDo(N)</button>
    <div class="anchor"><button class="open">ツール(T)</button>
      <div class="menu">
        <div class="scrollup"><svg><use href="#up"/></svg></div>
        <hr>
        <button>保存したファイル(L)<span>Ctrl+J</span></button>
        <button>アドオンとテーマ(A)</button>
        <button>イベントログの管理(V)</button>
        <button disabled>チャット状態(C)<svg class="sub"><use href="#right"/></svg></button>
        <button disabled>チャットに参加...(T)</button>
        <hr>
        <button>メッセージフィルター(F)</button>
        <button>フォルダーにフィルターを適用(R)</button>
        <button>メッセージにフィルターを適用(U)</button>
        <hr>
        <button>迷惑メールフィルターを実行(C)</button>
        <button>迷惑メールとマークされたメールを削除(D)</button>
        <hr>
        <button>設定とデータのインポート...(M)</button>
        <button>エクスポート...(X)</button>
        <button>OpenPGP 鍵マネージャー(O)</button>
        <button>開発ツール(E)<svg class="sub"><use href="#right"/></svg></button>
        <button>最近の履歴を消去...(H)<span>Ctrl+Shift+Del</span></button>
        <hr>
        <button>設定(E)</button>
        <button>アカウント設定(S)</button>
      </div>
    </div>
    <button>ヘルプ(H)</button>
  </nav>
  <div class="tabs"><div class="tab"><svg class="ico"><use href="#inbox"/></svg><span>受信トレイ -</span><i class="mask"></i></div></div>
  <div class="panes">
    <aside class="folders">
      <div class="side">
        <div class="tools"><button class="plain" aria-label="受信"><svg class="ico"><use href="#cloud"/></svg></button><button class="compose"><svg><use href="#plus"/></svg>メッセージ作成</button><button class="plain" aria-label="その他"><svg class="ico"><use href="#dots"/></svg></button></div>
        <ul class="tree">
          <li class="l0 b"><svg class="tw"><use href="#down"/></svg><svg class="ico blue"><use href="#folder"/></svg><span>ローカルフォルダー</span></li>
          <li class="l1"><i class="tw"></i><svg class="ico slate"><use href="#trash"/></svg><span>ごみ箱</span></li>
          <li class="l1"><i class="tw"></i><svg class="ico teal"><use href="#outbox"/></svg><span>送信トレイ</span></li>
          <li class="l1"><svg class="tw"><use href="#right"/></svg><svg class="ico"><use href="#folder"/></svg><span>000旧</span><i class="mask" style="width:72px"></i><span>フォルダー☆☆☆☆☆☆☆☆☆...</span></li>
          <li class="l1"><svg class="tw"><use href="#down"/></svg><svg class="ico"><use href="#folder"/></svg><i class="mask" style="width:200px"></i></li>
          <li class="l2"><i class="tw"></i><svg class="ico"><use href="#folder"/></svg><span>送信箱</span></li>
          <li class="l2 b"><i class="tw"></i><svg class="ico"><use href="#folder"/></svg><span>郵便受け</span><em>2</em></li>
          <li class="l1"><svg class="tw"><use href="#right"/></svg><svg class="ico"><use href="#folder"/></svg><i class="mask" style="width:194px"></i><em>293</em></li>
          <li class="l1"><svg class="tw"><use href="#down"/></svg><svg class="ico"><use href="#folder"/></svg><i class="mask" style="width:194px"></i></li>
          <li class="l2 b"><i class="tw"></i><svg class="ico"><use href="#folder"/></svg><span>受信済</span><em>5</em></li>
          <li class="l2"><i class="tw"></i><svg class="ico"><use href="#folder"/></svg><span>送信箱</span></li>
          <li class="l2 b"><i class="tw"></i><svg class="ico"><use href="#folder"/></svg><span>郵便受け</span><em>57</em></li>
          <li class="l1 b"><svg class="tw"><use href="#right"/></svg><svg class="ico"><use href="#folder"/></svg><i class="mask" style="width:398px"></i><span>..</span><em>52249</em></li>
          <li class="l1"><i class="tw"></i><svg class="ico"><use href="#folder"/></svg><span>下書き-</span><i class="mask" style="width:262px"></i></li>
          <li class="l1"><i class="tw"></i><svg class="ico"><use href="#folder"/></svg><span>送信済みトレイ-</span><i class="mask" style="width:290px"></i></li>
          <li class="l0"><svg class="tw"><use href="#down"/></svg><svg class="ico blue"><use href="#mail"/></svg><i class="mask" style="width:294px"></i></li>
          <li class="l1 b sel"><svg class="tw"><use href="#down"/></svg><svg class="ico new"><use href="#inbox"/><circle class="dot" cx="2" cy="2" r="6"/></svg><span>受信トレイ</span><em>16756</em></li>
          <li class="l2 b"><svg class="tw"><use href="#right"/></svg><svg class="ico"><use href="#folder"/></svg><i class="mask" style="width:390px"></i><em>4754</em></li>
          <li class="l1 b"><i class="tw"></i><svg class="ico violet"><use href="#draft"/></svg><span>下書き</span><em>13</em></li>
          <li class="l1"><i class="tw"></i><svg class="ico gray"><use href="#template"/></svg><span>テンプレート</span></li>
          <li class="l1"><i class="tw"></i><svg class="ico green"><use href="#sent"/></svg><span>送信済みトレイ</span></li>
        </ul>
      </div>
      <div class="bar"><svg><use href="#sup"/></svg><i></i><svg><use href="#sdown"/></svg></div>
    </aside>
    <div class="threads">
      <div class="list">
      <table>
        <colgroup><col class="c1"><col class="c2"><col class="c3"><col class="c4"><col class="c5"><col><col class="c7"></colgroup>
        <thead><tr><th><input type="checkbox" class="minus" aria-label="すべて選択"></th><th><svg class="ico"><use href="#clip"/></svg></th><th></th><th></th><th>タグ</th><th><div>送信日時<svg class="ico"><use href="#down"/></svg></div></th><th><svg class="ico"><use href="#picker"/></svg></th></tr></thead>
        <tbody>
        <tr><td><input type="checkbox" aria-label="選択"></td><td></td><td class="star">✦</td><td>パ...</td><td></td><td colspan="2">11:09</td></tr>
        <tr><td><input type="checkbox" aria-label="選択"></td><td></td><td></td><td></td><td></td><td colspan="2">11:06</td></tr>
        <tr><td><input type="checkbox" aria-label="選択"></td><td></td><td></td><td>式...</td><td></td><td colspan="2">11:05</td></tr>
        <tr><td><input type="checkbox" aria-label="選択"></td><td></td><td></td><td></td><td></td><td colspan="2">11:02</td></tr>
        <tr><td><input type="checkbox" aria-label="選択"></td><td></td><td></td><td>or...</td><td></td><td colspan="2">11:00</td></tr>
        <tr><td><input type="checkbox" aria-label="選択"></td><td></td><td></td><td class="far">...</td><td></td><td colspan="2">11:00</td></tr>
        <tr><td><input type="checkbox" aria-label="選択"></td><td></td><td></td><td></td><td></td><td colspan="2">10:45</td></tr>
        <tr><td><input type="checkbox" aria-label="選択"></td><td></td><td></td><td></td><td></td><td colspan="2">10:42</td></tr>
        <tr><td><input type="checkbox" aria-label="選択"></td><td></td><td></td><td></td><td></td><td colspan="2">10:39</td></tr>
        <tr><td><input type="checkbox" aria-label="選択"></td><td></td><td></td><td></td><td></td><td colspan="2">10:39</td></tr>
        <tr><td><input type="checkbox" aria-label="選択"></td><td></td><td></td><td></td><td></td><td colspan="2">10:38</td></tr>
        <tr><td><input type="checkbox" aria-label="選択"></td><td></td><td></td><td></td><td></td><td colspan="2">10:36</td></tr>
        <tr><td><input type="checkbox" aria-label="選択"></td><td></td><td></td><td>ー...</td><td></td><td colspan="2">10:29</td></tr>
        <tr><td><input type="checkbox" aria-label="選択"></td><td></td><td></td><td>パ...</td><td></td><td colspan="2">10:09</td></tr>
        <tr><td><input type="checkbox" aria-label="選択"></td><td></td><td></td><td class="far">...</td><td></td><td colspan="2">10:00</td></tr>
        <tr><td><input type="checkbox" aria-label="選択"></td><td></td><td></td><td></td><td></td><td colspan="2">9:41</td></tr>
        <tr><td><input type="checkbox" aria-label="選択"></td><td></td><td></td><td class="far">...</td><td></td><td colspan="2">9:31</td></tr>
        <tr><td><input type="checkbox" aria-label="選択"></td><td></td><td></td><td class="far">ー</td><td></td><td colspan="2">9:30</td></tr>
        <tr><td><input type="checkbox" aria-label="選択"></td><td></td><td></td><td class="far">...</td><td></td><td colspan="2">9:30</td></tr>
        <tr><td><input type="checkbox" aria-label="選択"></td><td></td><td></td><td>／...</td><td></td><td colspan="2">9:30</td></tr>
        <tr><td><input type="checkbox" aria-label="選択"></td><td></td><td></td><td></td><td></td><td colspan="2">9:20</td></tr>
        <tr><td><input type="checkbox" aria-label="選択"></td><td></td><td></td><td class="far">...</td><td></td><td colspan="2">9:20</td></tr>
        <tr><td><input type="checkbox" aria-label="選択"></td><td></td><td></td><td>米...</td><td></td><td colspan="2">9:19</td></tr>
        <tr class="read dim"><td><input type="checkbox" aria-label="選択" checked></td><td></td><td></td><td></td><td></td><td colspan="2">9:15</td></tr>
        </tbody>
      </table>
      </div>
      <div class="bar short"><svg><use href="#sup"/></svg><i></i><svg><use href="#sdown"/></svg></div>
    </div>
  </div>
  <footer class="status"><svg class="ico"><use href="#collapse"/></svg><svg class="ico"><use href="#online"/></svg><p>1 通のメッセージをダウンロードしました</p><button><svg class="ico"><use href="#cal"/></svg>Today ペイン<svg class="ico"><use href="#down"/></svg></button></footer>
  <div class="taskbar">
    <div class="start"><svg><use href="#win"/></svg><svg><use href="#find"/></svg></div>
    <div class="apps">
      <a href="#" class="run"><svg><use href="#a-hpb"/></svg></a><a href="#"><svg><use href="#a-pdf"/></svg></a><a href="#"><svg><use href="#a-play"/></svg></a><a href="#"><svg><use href="#a-frame"/></svg></a><a href="#"><svg><use href="#a-eye2"/></svg></a><a href="#"><svg><use href="#a-copy"/></svg></a><a href="#"><svg><use href="#a-bs"/></svg></a><a href="#"><svg><use href="#a-check"/></svg></a><a href="#"><svg><use href="#a-box"/></svg></a>
    </div>
    <a href="#" class="last"><svg><use href="#a-media"/></svg></a>
    <div class="spin"><svg><use href="#sup"/></svg><svg><use href="#sdown"/></svg></div>
    <div class="band"><svg><use href="#t-j"/></svg><svg><use href="#t-a"/></svg><svg><use href="#t-bucket"/></svg><svg><use href="#t-doc"/></svg><svg><use href="#t-tool"/></svg></div>
    <div class="tray"><svg class="more"><use href="#up"/></svg><svg viewBox="0 0 24 24"><use href="#a-bird"/><circle cx="18" cy="18" r="5" fill="#f5003d"/></svg><svg><use href="#t-sync"/></svg><time>11:10<br>2023/11/07</time><svg class="note"><use href="#t-note"/></svg></div>
  </div>
  <p class="caption">拡大縮小 175%</p>
  <svg class="arrow" viewBox="0 0 104 56"><path d="M104 28H8M32 4Q22 20 8 28 22 36 32 52" fill="none" stroke="#f00" stroke-width="11"/></svg>
</section>
</body>
</html>
```
FILE: styles.css
```css
* { box-sizing: border-box; }
body {
  margin: 0;
  padding: 59px 0 40px;
  background: #fff;
  color: #111;
  font-family: "Open Sans", "Noto Sans CJK JP", sans-serif;
  font-feature-settings: "palt";
}
button, input { font: inherit; font-feature-settings: inherit; color: inherit; }
button { border: 0; background: none; padding: 0; white-space: nowrap; }
p, ul { margin: 0; padding: 0; list-style: none; }
svg { display: block; flex: none; }
.defs { display: none; }

.window {
  --fs: 14px;
  --small: 13px;
  --big: 15px;
  --badge: 12px;
  --ico: 14px;
  --row: 20px;
  --step: 16px;
  --titleh: 37px;
  --menubarh: 26px;
  --tabh: 31px;
  --bar: 17px;
  --line: 18px;
  position: relative;
  font-size: var(--fs);
  line-height: var(--line);
}
.window.large {
  --fs: 24px;
  --small: 23px;
  --big: 26px;
  --badge: 22px;
  --ico: 26px;
  --row: 36px;
  --step: 28px;
  --titleh: 65px;
  --menubarh: 44px;
  --tabh: 59px;
  --bar: 30px;
  --line: 32px;
  margin-top: 25px;
}
.ico { width: var(--ico); height: var(--ico); }

/* title bar */
.titlebar {
  display: grid;
  grid-template-columns: 425px minmax(0, 936px) 1fr;
  align-items: center;
  height: var(--titleh);
  background: #d4d4d9;
  border-bottom: 1px solid #b4b4b9;
}
.large .titlebar { grid-template-columns: 427px minmax(0, 857px) 1fr; }
.lead { padding-left: 9px; }
.large .lead { padding-left: 15px; }
.search {
  display: flex;
  align-items: center;
  gap: 5px;
  height: 28px;
  padding: 0 6px 0 7px;
  background: #fff;
  border: 1px solid #a3a3a8;
  border-radius: 3px;
  color: #777;
}
.large .search { height: 52px; gap: 8px; padding: 0 9px 0 13px; border-radius: 6px; }
.search input { width: 43px; padding: 0; border: 0; background: none; outline: 0; font-size: var(--big); }
.large .search input { width: 77px; }
.search input::placeholder { color: #888; opacity: 1; }
kbd {
  padding: 0 3px;
  background: #e0e0e4;
  border-bottom: 2px solid #a0a0a6;
  border-radius: 3px;
  color: #333;
  font: bold 12px/15px "Liberation Mono", monospace;
}
.large kbd { padding: 0 7px; border-radius: 5px; font: 20px/25px "Liberation Mono", monospace; }
.go { margin-left: auto; color: #111; }
.winbtns { display: flex; justify-content: flex-end; padding-right: 1px; }
.winbtns button { display: grid; place-items: center; width: 45px; }
.winbtns svg { width: 12px; height: 12px; }
.large .winbtns { padding: 0; }
.large .winbtns button { width: 72px; }
.large .winbtns svg { width: 20px; height: 20px; }

/* menu bar and its open menu */
.menubar {
  display: flex;
  height: var(--menubarh);
  background: #d2d2d7;
}
.menubar > button, .open { height: 100%; padding: 0 6px; }
.large .menubar > button, .large .open { padding: 0 12px; }
.anchor { position: relative; }
.open { background: #dedee5; }
.menu {
  position: absolute;
  z-index: 5;
  top: 100%;
  left: -1px;
  width: 317px;
  padding: 2px 7px 3px;
  background: #f9f9fa;
  border: 1px solid #a2a2ad;
  border-radius: 8px;
  box-shadow: 0 1px 5px #0004;
  font-size: var(--small);
}
.menu button {
  display: flex;
  justify-content: space-between;
  align-items: center;
  position: relative;
  width: 100%;
  height: 28px;
  padding: 0 23px 0 27px;
}
.menu button span { font-size: var(--big); }
.menu button:disabled { color: #7d7d7d; }
.menu hr { height: 1px; margin: 4px 0; border: 0; background: #d0d0d3; }
.sub { width: 11px; height: 11px; margin-right: -19px; }
.large .menu { width: 559px; padding: 3px 13px 7px; border-radius: 14px; }
.large .menu button { height: 50px; padding: 0 43px 0 49px; }
.large .menu hr { margin: 7px 0; }
.large .sub { width: 18px; height: 18px; margin-right: -36px; }
.scrollup { display: grid; place-items: center; height: 34px; }
.scrollup svg { width: 20px; height: 20px; }

/* tabs */
.tabs {
  height: var(--tabh);
  padding: 3px 2px 0;
  background: #dadadf;
  border-bottom: 1px solid #a9a9af;
  box-shadow: inset 0 3px 4px #00000012;
}
.tab {
  display: flex;
  align-items: center;
  gap: 9px;
  position: relative;
  width: 251px;
  height: 28px;
  padding: 2px 0 0 11px;
  background: #fafafa;
  border-radius: 4px 4px 0 0;
}
.tab::before {
  content: "";
  position: absolute;
  top: 2px;
  left: 4px;
  right: 3px;
  height: 2px;
  background: #0a84ff;
}
.tab .mask { flex: 1; height: 16px; margin-right: -8px; }
.large .tabs { padding: 6px 5px 0; }
.large .tab { width: 441px; height: 53px; gap: 14px; padding: 2px 11px 0 17px; }
.large .tab::before { top: 5px; left: 6px; right: 5px; height: 3px; }
.large .tab .mask { height: 40px; margin: 0; }
.mask { flex: none; align-self: stretch; background: #fff; }

/* panes */
.panes { display: flex; height: 919px; overflow: hidden; }
.large .panes { height: 794px; }
.folders { display: flex; flex: none; width: 383px; background: #fafafa; border-right: 1px solid #d0d0d4; }
.large .folders { width: 675px; }
.side { flex: 1; min-width: 0; }
.tools { display: flex; align-items: center; justify-content: space-between; height: 35px; padding: 0 11px; color: #444; }
.large .tools { height: 60px; padding: 0 19px; }
.compose {
  display: flex;
  align-items: center;
  justify-content: center;
  gap: 8px;
  width: 115px;
  height: 28px;
  background: #1373d9;
  border: 1px solid #0f5fb8;
  border-radius: 3px;
  color: #fff;
  font-size: var(--small);
}
.compose svg { width: 9px; height: 9px; }
.large .compose { width: 200px; height: 48px; gap: 12px; border-radius: 5px; }
.large .compose svg { width: 16px; height: 16px; }
.tree li {
  display: flex;
  align-items: center;
  height: var(--row);
  margin: 0 6px;
  padding-right: 6px;
  color: #111;
  white-space: nowrap;
}
.large .tree li { margin: 0 10px 0 11px; padding-right: 11px; }
.tree .l1 { padding-left: var(--step); }
.tree .l2 { padding-left: calc(var(--step) * 2); }
.tree .l3 { padding-left: calc(var(--step) * 3); }
.b { font-weight: 600; }
.tw { flex: none; width: 12px; height: 12px; margin: 0 5px 0 2px; }
.large .tw { width: 20px; height: 20px; margin: 0 8px 0 5px; }
.tree .ico { margin-right: 8px; color: #e6ad08; }
.large .tree .ico { margin-right: 14px; }
.tree .blue { color: #1a8cff; }
.tree .slate { color: #5b5b85; }
.tree .teal { color: #179b9b; }
.tree .violet { color: #a24bf0; }
.tree .gray { color: #5c5c66; }
.tree .green { color: #2aa866; }
.tree .brown { color: #96705c; }
.tree .new { color: #fff; overflow: visible; }
.dot { fill: #ffd60a; stroke: #ff9500; stroke-width: 2px; }
.tree .sel { background: #e2e2e6; border-radius: 3px; }
.large .tree .sel { background: #2490f0; border-radius: 5px; color: #fff; }
em {
  min-width: 16px;
  height: 19px;
  margin-left: auto;
  padding: 0 4px;
  background: #6e6e78;
  border-radius: 10px;
  color: #fff;
  font-size: var(--badge);
  font-style: normal;
  font-weight: 600;
  line-height: 19px;
  text-align: center;
}
.large em { min-width: 28px; height: 34px; padding: 0 7px; border-radius: 17px; line-height: 34px; }
.large .sel em { background: #fff; color: #1a86ea; }
.cut54, .cut38, .cut56 { flex: none; overflow: hidden; }
.cut54 { width: 54px; }
.cut38 { width: 38px; }
.cut56 { width: 56px; }
.grow { flex: 1; }
.tail { display: flex; flex: none; justify-content: flex-end; width: 20px; overflow: hidden; font-weight: 400; }
.tail em { flex: none; }
.tail.s { justify-content: flex-start; }

/* scroll bars */
.bar { display: flex; flex: none; flex-direction: column; align-items: center; width: var(--bar); background: #efefef; }
.bar svg { width: 11px; height: 11px; margin: 3px 0 4px; }
.bar i { width: 100%; height: 112px; margin-bottom: auto; background: #cbcbcb; }
.short i { height: 17px; }
.large .bar svg { width: 18px; height: 18px; margin: 4px 0 8px; }
.large .bar i { height: 41px; }
.large .short i { height: 29px; }

/* message list */
.threads { display: flex; flex: 1; min-width: 0; background: #fff; }
.list { flex: 1; min-width: 0; overflow: hidden; }
table { width: 100%; table-layout: fixed; border-collapse: collapse; }
.c1 { width: 18px; }
.c2 { width: 19px; }
.c3 { width: 240px; }
.c4 { width: 133px; }
.c5 { width: 59px; }
.c7 { width: 29px; }
.large .c1 { width: 35px; }
.large .c2 { width: 29px; }
.large .c3 { width: 480px; }
.large .c4 { width: 183px; }
.large .c5 { width: 102px; }
.large .c7 { width: 43px; }
th, td { padding: 0; text-align: left; white-space: nowrap; overflow: hidden; }
th { height: 28px; font-size: var(--big); font-weight: 400; border-right: 1px solid #dadadd; border-bottom: 1px solid #d4d4d8; }
th:nth-child(3), th:last-child { border-right: 0; }
.large th { height: 48px; }
th > .ico { margin: 0 auto; }
th:last-child .ico { width: 12px; height: 12px; }
.large th:last-child .ico { width: 20px; height: 20px; }
th > div { display: flex; justify-content: space-between; align-items: center; padding-right: 2px; }
th div .ico { width: 11px; height: 11px; }
.large th div .ico { width: 19px; height: 19px; }
.large th > div { padding-right: 13px; }
th:nth-child(n+5), td:nth-child(n+5) { padding-left: 7px; }
th:last-child { padding-left: 0; }
.large th:nth-child(n+5), .large td:nth-child(n+5) { padding-left: 11px; }
.large th:last-child { padding-left: 0; }
tbody tr { height: 18px; color: #15153a; font-weight: 600; }
.large tbody tr { height: 32px; }
.large tbody tr:nth-child(4n) { height: 31px; }
td { line-height: 17px; }
.large td { line-height: 30px; }
td:nth-child(3) { padding-left: 41px; }
td:nth-child(3) span { display: block; width: 37px; overflow: hidden; }
td:nth-child(4) { padding-right: 9px; text-align: right; }
td.far { padding-right: 18px; }
.large td:nth-child(4) { padding-right: 15px; }
.large td.far { padding-right: 24px; }
td.star:nth-child(3) { padding-left: 44px; color: #f58a1f; }
tbody tr.red { color: #f00; font-weight: 400; }
tbody tr.read { font-weight: 400; }
tbody tr.on { background: #1373d9; color: #fff; }
tbody tr.dim { background: #e2e2e6; }
input[type="checkbox"] {
  appearance: none;
  display: block;
  position: relative;
  width: 14px;
  height: 14px;
  margin: 0 0 0 2px;
  background: #fff;
  border: 1px solid #22223a;
  border-radius: 3px;
}
.large input[type="checkbox"] { width: 24px; height: 24px; margin-left: 5px; border-width: 2px; border-radius: 5px; }
.on input[type="checkbox"] { background: none; border-color: #fff; }
.dim input[type="checkbox"] { background: none; }
input[type="checkbox"]:checked::after {
  content: "";
  position: absolute;
  top: 1px;
  left: 4px;
  width: 4px;
  height: 8px;
  border: solid currentColor;
  border-width: 0 1px 1px 0;
  transform: rotate(40deg);
}
.large input[type="checkbox"]:checked::after { left: 7px; width: 7px; height: 14px; border-width: 0 2px 2px 0; }
.minus::after { content: ""; position: absolute; top: 50%; left: 20%; right: 20%; border-top: 1px solid #22223a; }

/* status bar */
.status { display: flex; align-items: center; height: 27px; padding-left: 6px; background: #fafafa; border-top: 1px solid #c8c8cc; font-size: var(--small); }
.status > .ico + .ico { width: 16px; margin-left: 9px; }
.status p { margin-left: 6px; padding-left: 11px; border-left: 1px solid #e0e0e2; line-height: 26px; }
.status button { display: flex; align-items: center; gap: 6px; height: 24px; margin-left: auto; padding: 0 8px 0 12px; border-left: 1px solid #e0e0e2; }
.status button .ico { width: 12px; height: 12px; }
.status button .ico:first-child { width: 16px; height: 16px; }
.large .status { height: 48px; padding-left: 11px; }
.large .status > .ico + .ico { width: 28px; margin-left: 13px; }
.large .status p { margin-left: 11px; padding-left: 20px; line-height: 46px; }
.large .status button { gap: 10px; height: 42px; padding: 0 13px 0 20px; }
.large .status button .ico { width: 20px; height: 20px; }
.large .status button .ico:first-child { width: 28px; height: 28px; }

/* task bar */
.taskbar { display: flex; height: 39px; background: #ededed; }
.large .taskbar { height: 70px; }
.start { display: flex; width: 98px; }
.start svg { width: 48px; height: 20px; margin-top: 9px; }
.start svg + svg { height: 24px; margin-top: 7px; }
.large .start { width: 172px; }
.large .start svg { width: 84px; height: 30px; margin-top: 20px; }
.large .start svg + svg { height: 42px; margin-top: 14px; }
.apps { display: flex; }
.apps a { display: grid; place-items: center; width: 38px; height: 100%; }
.apps svg { width: 24px; height: 24px; }
.large .apps a { width: 69px; }
.large .apps svg, .last svg { width: 42px; height: 42px; }
.run { position: relative; }
.run::after { content: ""; position: absolute; left: 5px; right: 4px; bottom: 0; height: 2px; background: #00b4cc; }
.front { background: #fafafa; }
.front::after { left: 0; right: 0; }
.large .run::after { left: 8px; right: 8px; height: 4px; }
.last { display: grid; place-items: center; width: 70px; margin-left: auto; }
.spin { display: flex; flex-direction: column; justify-content: space-between; align-items: center; width: 18px; margin-left: 15px; padding: 6px 0; border-left: 1px solid #fff; }
.spin svg { width: 9px; height: 9px; }
.large .spin { width: 28px; margin: 0 4px 0 8px; padding: 10px 0; }
.large .spin svg { width: 14px; height: 14px; }
.band { display: grid; grid-template-columns: repeat(5, 33px); place-items: center; padding: 0 0 6px 5px; }
.band svg { width: 28px; height: 28px; }
.large .band { grid-template-columns: repeat(4, 32px); padding: 0 0 2px 4px; }
.tray { display: flex; align-items: center; margin-left: auto; padding-right: 10px; }
.tray svg { width: 20px; height: 18px; margin: 0 2px; }
.tray .more { width: 14px; height: 14px; margin: 0 6px; }
.tray time { width: 68px; font-size: 11px; line-height: 18px; text-align: center; }
.tray .note { width: 28px; height: 28px; margin: 0 8px; }
.large .tray { margin-left: 0; padding-right: 25px; }
.large .tray svg { width: 30px; height: 30px; margin: 0 5px; }
.large .tray .more { width: 20px; height: 20px; margin: 0 13px; }
.large .tray time { width: 130px; font-size: 19px; line-height: 34px; }
.large .tray .note { width: 46px; height: 46px; margin: 0 10px; }

/* red annotations laid over the windows */
.caption {
  position: absolute;
  z-index: 6;
  top: 8px;
  left: 785px;
  color: #f00;
  font-family: "Noto Sans CJK JP", sans-serif;
  font-size: 64px;
  font-weight: 500;
  line-height: 66px;
  font-feature-settings: normal;
  white-space: nowrap;
}
.large .caption { top: -4px; left: 630px; }
.arrow { position: absolute; z-index: 6; top: 626px; left: 511px; width: 44px; height: 102px; }
.large .arrow { top: 1022px; left: 1366px; width: 104px; height: 56px; }
```
